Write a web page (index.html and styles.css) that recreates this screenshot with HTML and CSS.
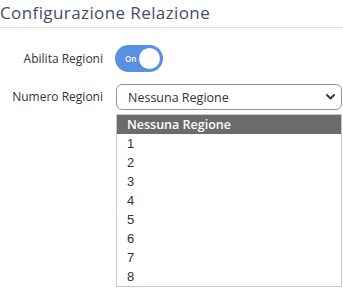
FILE: index.html
```html
<!DOCTYPE html>
<html lang="en">
<head>
    <meta charset="UTF-8">
    <meta name="viewport" content="width=device-width, initial-scale=1.0">
    <title>Configurazione Relazione</title>
    <link rel="stylesheet" href="styles.css">
</head>
<body>
    <div class="panel">
        <h2 class="title">Configurazione Relazione</h2>

        <div class="form-row">
            <label class="row-label">Abilita Regioni</label>
            <div class="switch">
                <span class="switch-text">On</span>
                <span class="knob"></span>
            </div>
        </div>

        <div class="form-row form-row-select">
            <label class="row-label">Numero Regioni</label>
            <div class="select-col">
                <div class="select">
                    <span>Nessuna Regione</span>
                    <svg class="chevron" width="9" height="6" viewBox="0 0 9 6">
                        <path d="M1 1 L4.5 4.5 L8 1" fill="none" stroke="#333" stroke-width="1.8" stroke-linecap="round" stroke-linejoin="round"/>
                    </svg>
                </div>
                <!-- open dropdown list -->
                <ul class="options">
                    <li class="option selected">Nessuna Regione</li>
                    <li class="option">1</li>
                    <li class="option">2</li>
                    <li class="option">3</li>
                    <li class="option">4</li>
                    <li class="option">5</li>
                    <li class="option">6</li>
                    <li class="option">7</li>
                    <li class="option">8</li>
                </ul>
            </div>
        </div>
    </div>
</body>
</html>
```

FILE: styles.css
```css
body {
    margin: 0;
    background-color: #fff;
    font-family: "Open Sans", Lato, sans-serif;
    color: #333;
}
.panel {
    width: 343px;
}
.title {
    margin: 0;
    padding: 3px 0 4px 0;
    font-size: 17px;
    font-weight: 400;
    letter-spacing: 0.4px;
    color: #41506a;
    border-bottom: 1px solid #e0e0e0;
    line-height: 20px;
}
.form-row {
    display: flex;
    align-items: center;
    margin-top: 17px;
}
.form-row-select {
    align-items: flex-start;
    margin-top: 12px;
}
.row-label {
    width: 103px;
    text-align: right;
    font-size: 12px;
    color: #333;
}
.form-row-select .row-label {
    line-height: 26px;
}
.switch {
    margin-left: 12px;
    width: 48px;
    height: 27px;
    border-radius: 14px;
    background-color: #5b8fe2;
    display: flex;
    align-items: center;
    box-sizing: border-box;
    padding: 0 3px 0 10px;
}
.switch-text {
    font-size: 8px;
    font-weight: 600;
    color: #fff;
    flex: 1;
}
.knob {
    width: 21px;
    height: 21px;
    border-radius: 50%;
    background-color: #fff;
}
.select-col {
    margin-left: 13px;
    flex: 1;
    margin-right: 1px;
}
.select {
    height: 26px;
    box-sizing: border-box;
    border: 1px solid #8a98ad;
    border-radius: 6px;
    display: flex;
    align-items: center;
    justify-content: space-between;
    padding: 0 6px 0 11px;
    font-size: 12.5px;
    color: #333;
}
.options {
    list-style: none;
    margin: 4px 0 0 0;
    padding: 0;
    border: 1px solid #c8c8c8;
}
.option {
    height: 19px;
    line-height: 19px;
    padding-left: 10px;
    font-family: "Liberation Sans", Arial, sans-serif;
    font-size: 13px;
    color: #333;
}
.option.selected {
    background-color: #6b6b6b;
    color: #fff;
    font-family: "Open Sans", sans-serif;
    font-weight: 600;
    font-size: 12.5px;
}
```
